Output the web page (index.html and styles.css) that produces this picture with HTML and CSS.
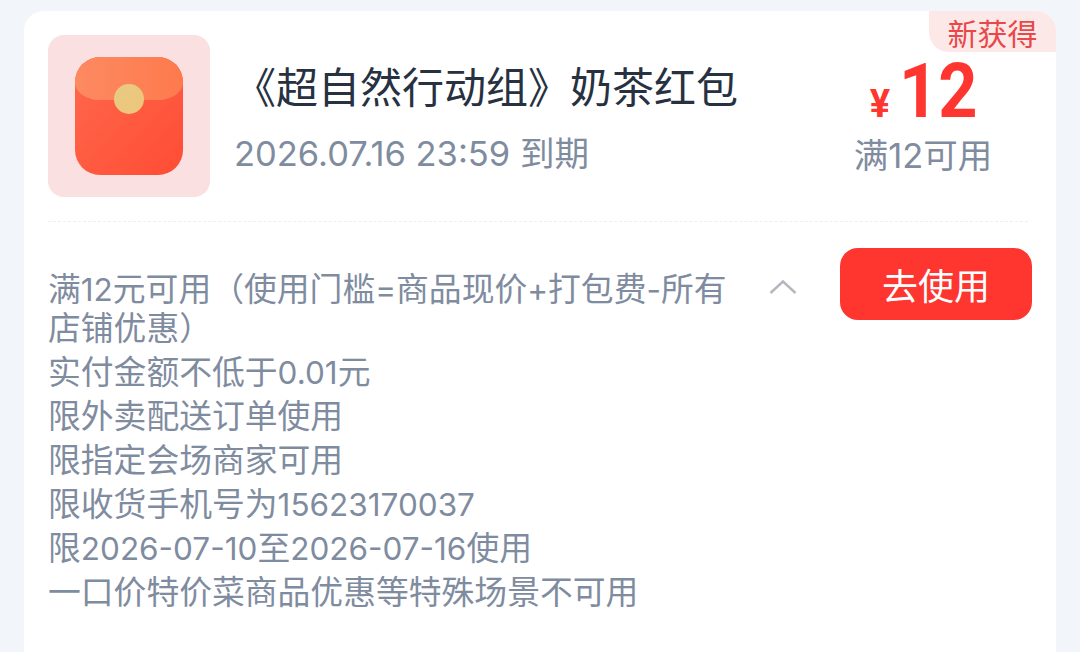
FILE: index.html
```html
<!DOCTYPE html>
<html lang="zh">
<head>
<meta charset="utf-8">
<title>红包</title>
<link rel="stylesheet" href="styles.css">
</head>
<body>
<main class="card">
  <span class="badge">新获得</span>
  <section class="top">
    <div class="thumb">
      <svg class="packet" width="108" height="120" viewBox="0 0 108 120">
        <defs>
          <linearGradient id="body" x1="0" y1="0" x2="1" y2="1"><stop offset="0" stop-color="#ff6a4c"/><stop offset="1" stop-color="#fe4c35"/></linearGradient>
          <linearGradient id="flap" x1="0" y1="0" x2="1" y2="0"><stop offset="0" stop-color="#fd8a62"/><stop offset="1" stop-color="#fe7a4c"/></linearGradient>
          <linearGradient id="coin" x1="0" y1="0" x2="1" y2="1"><stop offset="0" stop-color="#e7cb83"/><stop offset="1" stop-color="#efc47a"/></linearGradient>
        </defs>
        <rect width="108" height="118" y="1" rx="25" fill="url(#body)"/>
        <path d="M0 26 A25 25 0 0 1 25 1 H83 A25 25 0 0 1 108 26 V27 C108 36 96 44 84 44 H24 C12 44 0 36 0 27 Z" fill="url(#flap)"/>
        <circle cx="54" cy="43" r="15" fill="url(#coin)"/>
      </svg>
    </div>
    <div class="info">
      <h1 class="title">《超自然行动组》奶茶红包</h1>
      <p class="expire">2026.07.16 23:59 到期</p>
    </div>
    <div class="price">
      <div class="amount"><span class="yen">¥</span><span class="num">12</span></div>
      <div class="limit">满12可用</div>
    </div>
  </section>
  <hr class="divider">
  <section class="bottom">
    <div class="rules">
      <p class="wrapped"><span>满</span><span class="n">12</span><span>元可用（使用门槛</span><span class="n">=</span><span>商品现价</span><span class="n">+</span><span>打包费</span><span class="n">-</span><span>所有</span><wbr><span>店铺优惠）</span></p>
      <p><span>实付金额不低于</span><span class="n">0.01</span><span>元</span></p>
      <p>限外卖配送订单使用</p>
      <p>限指定会场商家可用</p>
      <p><span>限收货手机号为</span><span class="n">15623170037</span></p>
      <p><span>限</span><span class="n">2026-07-10</span><span>至</span><span class="n">2026-07-16</span><span>使用</span></p>
      <p>一口价特价菜商品优惠等特殊场景不可用</p>
    </div>
    <svg class="chevron" width="28" height="16" viewBox="0 0 28 16"><path d="M1.5 14 L14 2.5 L26.5 14" fill="none" stroke="#b4b8be" stroke-width="2.4"/></svg>
    <button class="use">去使用</button>
  </section>
</main>
</body>
</html>
```
FILE: styles.css
```css
* { box-sizing: border-box; }
html, body { margin: 0; height: 652px; overflow: hidden; }
body {
  background: #f2f5f9;
  padding: 11px 24px 0;
  font-family: "Inter", "Noto Sans CJK SC", sans-serif;
}
.card {
  position: relative;
  background: #fff;
  width: 1032px;
  height: 660px;
  border-radius: 20px;
  padding: 24px 24px 0;
}
.badge {
  position: absolute;
  top: 0;
  right: 0;
  width: 127px;
  height: 41px;
  background: #fde8e8;
  border-radius: 0 20px 0 20px;
  color: #e8484a;
  font-size: 30px;
  line-height: 47px;
  text-align: center;
}
.top { display: flex; align-items: flex-start; height: 162px; }
.thumb {
  width: 162px;
  height: 162px;
  flex: none;
  background: #fbe0e1;
  border-radius: 16px;
  display: flex;
  align-items: center;
  justify-content: center;
}
.info { flex: none; width: 620px; padding-left: 24px; padding-top: 24px; }
.title {
  margin: 0;
  font-size: 42px;
  line-height: 58px;
  font-weight: 400;
  color: #27313f;
  white-space: nowrap;
}
.expire {
  margin: 13px 0 0;
  font-size: 34.5px;
  line-height: 48px;
  color: #7f8ca0;
  white-space: nowrap;
}
.price { flex: none; width: 186px; display: flex; flex-direction: column; align-items: center; padding-top: 20px; }
.amount { display: flex; align-items: baseline; height: 72px; color: #ff3530; }
.yen { font-family: "Roboto", sans-serif; font-size: 38px; font-weight: 700; margin-right: 9px; }
.num {
  display: inline-block;
  margin-right: -10px;
  font-family: "Roboto", sans-serif;
  font-size: 76px;
  line-height: 72px;
  font-weight: 700;
  transform: scaleX(0.9);
  transform-origin: left;
}
.limit { font-size: 34.5px; line-height: 48px; color: #7f8ca0; margin-top: 5px; white-space: nowrap; }
.divider {
  margin: 24px 0 0;
  border: 0;
  border-top: 1px dashed #eeeff1;
  width: 980px;
}
.bottom { display: flex; align-items: flex-start; margin-top: 26px; }
.rules { width: 696px; flex: none; padding-top: 22px; font-size: 32.8px; line-height: 44px; color: #7f8ca0; }
.rules p { margin: 0; }
.rules .wrapped { line-height: 39px; margin-bottom: 2px; }
.n { font-size: 31.5px; line-height: 1; }
.chevron { flex: none; margin: 31px 0 0 25px; }
.use {
  flex: none;
  margin-left: 43px;
  width: 192px;
  height: 72px;
  border: 0;
  border-radius: 18px;
  background: #ff3530;
  color: #fff;
  font-family: inherit;
  font-size: 36px;
}
```
